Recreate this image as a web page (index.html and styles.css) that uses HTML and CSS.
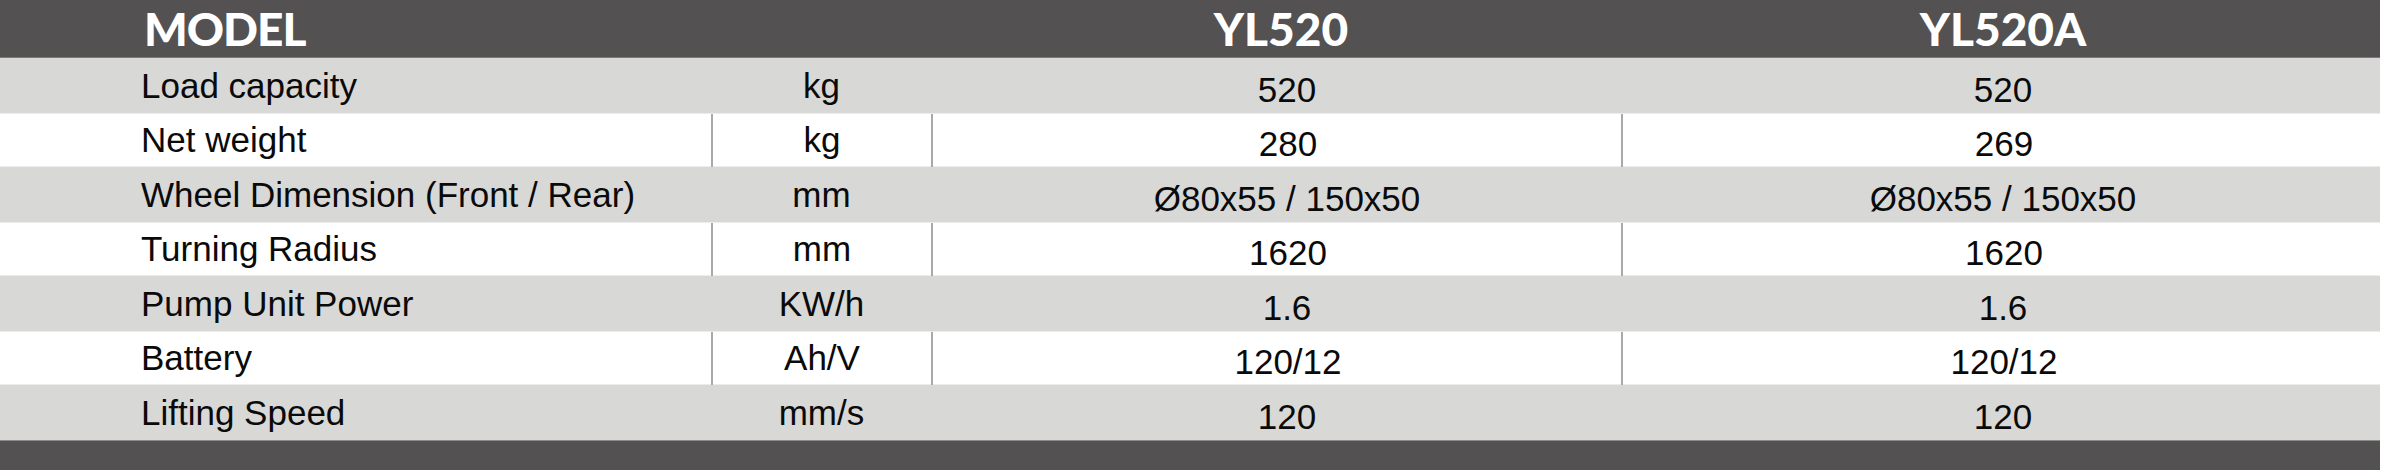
FILE: index.html
```html
<!DOCTYPE html>
<html>
<head>
<meta charset="utf-8">
<link rel="stylesheet" href="styles.css">
</head>
<body>
<div class="sheet">
  <div class="row head">
    <div class="hcell model">MODEL</div>
    <div class="hcell"></div>
    <div class="hcell m1">YL520</div>
    <div class="hcell m2">YL520A</div>
  </div>
  <div class="row gray">
    <div class="label">Load capacity</div><div class="unit">kg</div><div class="val v1">520</div><div class="val v2">520</div>
  </div>
  <div class="row white">
    <div class="label">Net weight</div><div class="unit">kg</div><div class="val v1">280</div><div class="val v2">269</div>
  </div>
  <div class="row gray">
    <div class="label">Wheel Dimension (Front / Rear)</div><div class="unit">mm</div><div class="val v1">Ø80x55 / 150x50</div><div class="val v2">Ø80x55 / 150x50</div>
  </div>
  <div class="row white">
    <div class="label">Turning Radius</div><div class="unit">mm</div><div class="val v1">1620</div><div class="val v2">1620</div>
  </div>
  <div class="row gray">
    <div class="label">Pump Unit Power</div><div class="unit">KW/h</div><div class="val v1">1.6</div><div class="val v2">1.6</div>
  </div>
  <div class="row white">
    <div class="label">Battery</div><div class="unit">Ah/V</div><div class="val v1">120/12</div><div class="val v2">120/12</div>
  </div>
  <div class="row gray">
    <div class="label">Lifting Speed</div><div class="unit">mm/s</div><div class="val v1">120</div><div class="val v2">120</div>
  </div>
  <div class="foot"></div>
</div>
</body>
</html>
```
FILE: styles.css
```css
html, body {
  margin: 0;
  padding: 0;
  background: #ffffff;
}
body {
  font-family: "Liberation Sans", Arial, sans-serif;
  color: #0a0a0a;
}
.sheet {
  width: 2380px;
  display: flex;
  flex-direction: column;
}
.row {
  display: grid;
  grid-template-columns: 712px 219px 690px 759px;
  height: 55px;
  font-size: 35px;
  line-height: 55px;
}
.row.head {
  height: 57px;
  line-height: 57px;
  background: #535152;
  border-bottom: 1px solid #7b7a7a;
}
.hcell {
  color: #ffffff;
  font-family: "Lato", "Liberation Sans", sans-serif;
  font-weight: 900;
  font-size: 46px;
  white-space: nowrap;
}
.hcell.model {
  padding-left: 144px;
  letter-spacing: -1px;
}
.hcell.m1 {
  text-align: center;
  padding-left: 10px;
}
.hcell.m2 {
  text-align: center;
  padding-left: 5px;
}
.row.gray {
  background: #d8d8d6;
}
.row.white {
  background: #ffffff;
  border-top: 1px solid #ececec;
  border-bottom: 1px solid #ececec;
  height: 52px;
  line-height: 52px;
}
.label {
  padding-left: 141px;
  padding-bottom: 12px;
  white-space: nowrap;
}
.unit {
  text-align: center;
  padding-bottom: 11px;
}
.val {
  text-align: center;
  padding-top: 4px;
  white-space: nowrap;
}
.val.v1 { padding-left: 22px; }
.val.v2 { padding-left: 5px; }
.row.white .unit,
.row.white .val.v1,
.row.white .val.v2 {
  border-left: 2px solid #a9a9a9;
}
.row.white .unit { margin-left: -1px; }
.foot {
  height: 29px;
  background: #535152;
  border-top: 1px solid #8a8a8a;
}
```
